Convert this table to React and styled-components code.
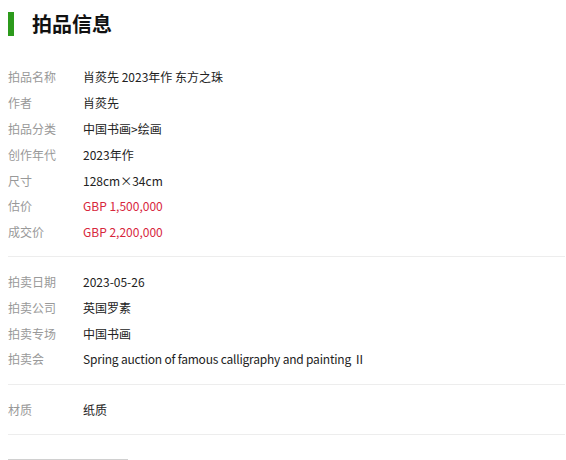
import React from 'react'
import styled, { createGlobalStyle } from 'styled-components'

const GlobalStyle = createGlobalStyle`
  body {
    margin: 0;
    background: #fff;
    font-family: "Microsoft YaHei", "Noto Sans CJK SC", "Noto Sans", sans-serif;
  }
`;

const Wrap = styled.div`
  padding: 0 1px 0 8px;
`;

const Title = styled.h2`
  display: flex;
  align-items: center;
  gap: 18px;
  height: 24px;
  margin: 12px 0 28px;
  font-size: 20px;
  font-weight: bold;
  color: #111;
  line-height: 24px;
  &::before {
    content: '';
    width: 6px;
    height: 24px;
    background: #2c9a1c;
  }
`;

const Section = styled.div`
  padding: ${p => p.$top}px 0 ${p => p.$bottom}px;
  border-bottom: 1px solid #ededed;
`;

const Row = styled.div`
  display: flex;
  height: 25.8px;
  align-items: center;
  font-size: 12px;
`;

const Label = styled.span`
  width: 75px;
  color: #999;
`;

const Value = styled.span`
  color: ${p => (p.$red ? '#d7263d' : '#222')};
  letter-spacing: ${p => (p.$tight ? '-0.2px' : '0')};
`;

const Tail = styled.div`
  width: 120px;
  margin-top: 24px;
  border-bottom: 2px solid #d0d0d0;
`;

const groups = [
  {
    top: 0,
    bottom: 11,
    rows: [
      ['拍品名称', '肖菼先 2023年作 东方之珠'],
      ['作者', '肖菼先'],
      ['拍品分类', '中国书画>绘画'],
      ['创作年代', '2023年作'],
      ['尺寸', '128cm×34cm'],
      ['估价', 'GBP 1,500,000', true],
      ['成交价', 'GBP 2,200,000', true],
    ],
  },
  {
    top: 12,
    bottom: 12,
    rows: [
      ['拍卖日期', '2023-05-26'],
      ['拍卖公司', '英国罗素'],
      ['拍卖专场', '中国书画'],
      ['拍卖会', 'Spring auction of famous calligraphy and painting Ⅱ'],
    ],
  },
  {
    top: 12,
    bottom: 11,
    rows: [['材质', '纸质']],
  },
];

export default function App() {
  return (
    <Wrap>
      <GlobalStyle />
      <Title>拍品信息</Title>
      {groups.map((g, i) => (
        <Section key={i} $top={g.top} $bottom={g.bottom}>
          {g.rows.map(([k, v, red]) => (
            <Row key={k}>
              <Label>{k}</Label>
              <Value $red={red} $tight={v.length > 30}>{v}</Value>
            </Row>
          ))}
        </Section>
      ))}
      <Tail />
    </Wrap>
  );
}
